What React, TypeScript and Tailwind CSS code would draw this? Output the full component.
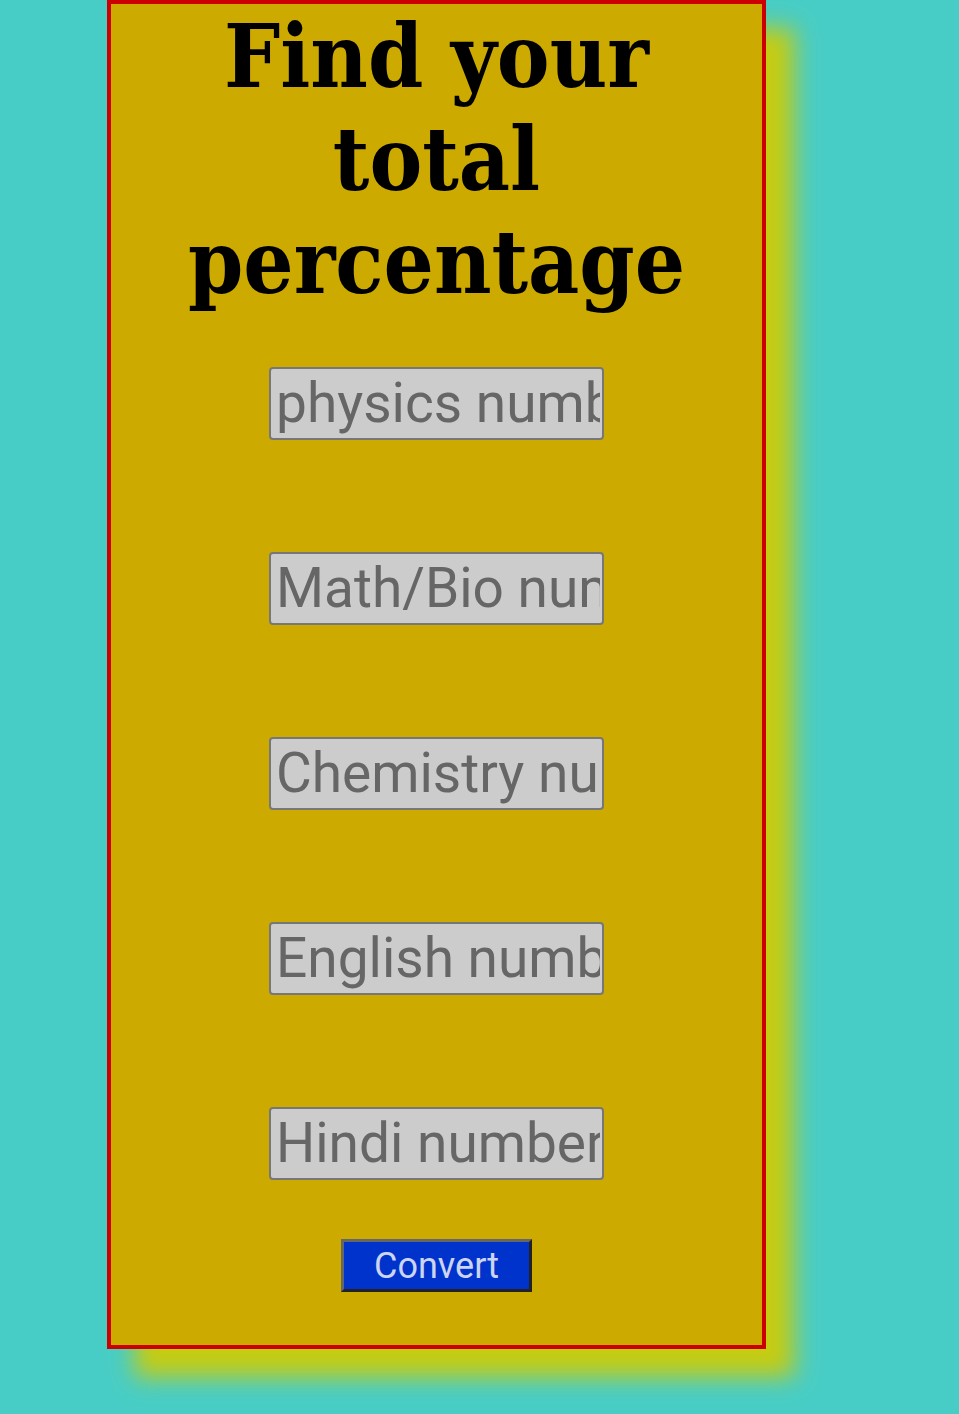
import React from 'react';

const fields = [
  'physics number',
  'Math/Bio number',
  'Chemistry number',
  'English number',
  'Hindi number',
];

export default function App() {
  return (
    <div className="min-h-[1414px] w-full bg-[#48cdc6] overflow-hidden">
      <div className="ml-[107px] w-[659px] h-[1349px] border-4 border-[#cc0000] bg-[#ccaa00] shadow-[28px_28px_22px_#c6cc12] flex flex-col items-center">
        {/* Title */}
        <h1
          className="mt-[1px] text-center text-[88px] leading-[103px] font-bold text-black"
          style={{ fontFamily: '"DejaVu Serif Condensed", "DejaVu Serif", serif', fontStretch: 'condensed' }}
        >
          Find your
          <br />
          total
          <br />
          percentage
        </h1>

        <div className="mt-[53px] flex flex-col items-center gap-[112px]">
          {fields.map((f) => (
            <input
              key={f}
              type="text"
              inputMode="numeric"
              placeholder={f}
              className="w-[335px] h-[73px] rounded-[4px] border-2 border-[#777] bg-[#cccccc] pl-[5px] pr-[2px] text-[55px] text-[#555] placeholder:text-[#666] outline-none"
              style={{ fontFamily: 'Roboto, sans-serif' }}
            />
          ))}
        </div>

        <button
          className="mt-[59px] w-[191px] h-[53px] bg-[#0033cc] border-[3px] border-t-[#666] border-l-[#666] border-r-[#222] border-b-[#222] text-[36px] leading-none text-[#ccd4f0]"
          style={{ fontFamily: 'Roboto, sans-serif' }}
        >
          Convert
        </button>
      </div>
    </div>
  );
}
